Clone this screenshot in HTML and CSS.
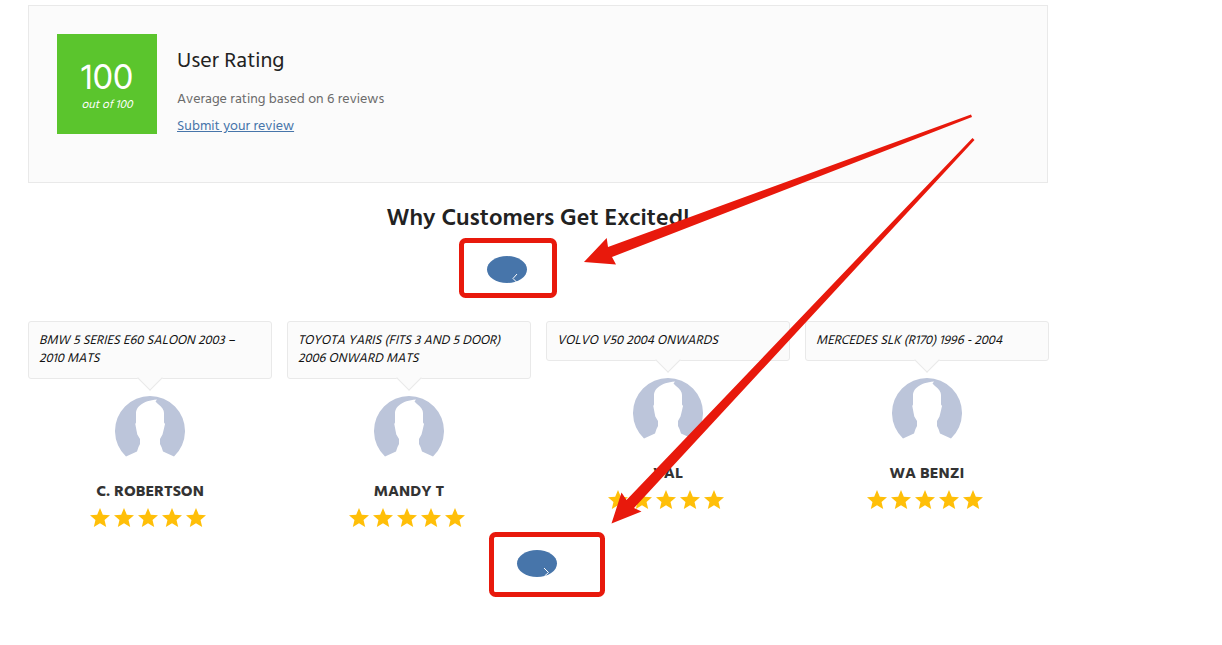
FILE: index.html
```
<!DOCTYPE html>
<html lang="en">

<head>
  <meta charset="UTF-8">
  <meta name="viewport" content="width=device-width, initial-scale=1.0">
  <title>User Rating</title>
  <link rel="stylesheet" href="styles.css">
</head>

<body>
  <!-- Shared shapes -->
  <svg class="sprite" aria-hidden="true">
    <symbol id="avatar" viewBox="0 0 70 70">
      <path d="M11 60.500A35 35 0 1 1 59 60.500L48 55.500L46.500 51L45 48V43L47.500 38.500L48.500 34.500L50 28L49 26.500V17C49 14 47 11 43 8L40.500 5.500L42 3.500C35 4 29 6 25.500 9C22 12 21 14 21 18V26.500L20.300 28L21.500 34.500L22.300 38.500L25 43V48L23.500 51L22 55.500Z"/>
    </symbol>
    <symbol id="star" viewBox="0 0 24 24">
      <path d="M12 17.270L18.180 21l-1.640-7.030L22 9.240l-7.190-.61L12 2 9.190 8.630 2 9.240l5.460 4.730L5.820 21z"/>
    </symbol>
  </svg>

  <main class="page">
    <section class="rating">
      <div class="score">
        <span class="score-value">100</span>
        <span class="score-total">out of 100</span>
      </div>
      <div class="rating-info">
        <h3>User Rating</h3>
        <p>Average rating based on 6 reviews</p>
        <a href="#review">Submit your review</a>
      </div>
    </section>

    <section class="testimonials">
      <h2>Why Customers Get Excited!</h2>

      <button type="button" class="nav prev" aria-label="Previous">
        <svg width="6" height="10" viewBox="0 0 6 10"><path d="M5 1L1 5.500l4 4"/></svg>
      </button>

      <div class="cards">
        <article class="card">
          <p class="bubble">BMW 5 SERIES E60 SALOON 2003 – 2010 MATS</p>
          <svg class="avatar"><use href="#avatar"/></svg>
          <h4>C. ROBERTSON</h4>
          <div class="stars" role="img" aria-label="5 stars">
            <svg><use href="#star"/></svg>
            <svg><use href="#star"/></svg>
            <svg><use href="#star"/></svg>
            <svg><use href="#star"/></svg>
            <svg><use href="#star"/></svg>
          </div>
        </article>

        <article class="card">
          <p class="bubble">TOYOTA YARIS (FITS 3 AND 5 DOOR) 2006 ONWARD MATS</p>
          <svg class="avatar"><use href="#avatar"/></svg>
          <h4>MANDY T</h4>
          <div class="stars" role="img" aria-label="5 stars">
            <svg><use href="#star"/></svg>
            <svg><use href="#star"/></svg>
            <svg><use href="#star"/></svg>
            <svg><use href="#star"/></svg>
            <svg><use href="#star"/></svg>
          </div>
        </article>

        <article class="card">
          <p class="bubble">VOLVO V50 2004 ONWARDS</p>
          <svg class="avatar"><use href="#avatar"/></svg>
          <h4>VAL</h4>
          <div class="stars" role="img" aria-label="5 stars">
            <svg><use href="#star"/></svg>
            <svg><use href="#star"/></svg>
            <svg><use href="#star"/></svg>
            <svg><use href="#star"/></svg>
            <svg><use href="#star"/></svg>
          </div>
        </article>

        <article class="card">
          <p class="bubble">MERCEDES SLK (R170) 1996 - 2004</p>
          <svg class="avatar"><use href="#avatar"/></svg>
          <h4>WA BENZI</h4>
          <div class="stars" role="img" aria-label="5 stars">
            <svg><use href="#star"/></svg>
            <svg><use href="#star"/></svg>
            <svg><use href="#star"/></svg>
            <svg><use href="#star"/></svg>
            <svg><use href="#star"/></svg>
          </div>
        </article>
      </div>

      <button type="button" class="nav next" aria-label="Next">
        <svg width="6" height="10" viewBox="0 0 6 10"><path d="M1 1l4.500 4.500-4 3.500"/></svg>
      </button>
    </section>
  </main>

  <!-- Red markup drawn over the page -->
  <svg class="markup" width="1000" height="620" aria-hidden="true">
    <rect x="461.500" y="240.500" width="93" height="55" rx="4"/>
    <rect x="491.500" y="534.500" width="111" height="60" rx="4"/>
    <path d="M584 262L606.700 238 608 247 971 114.500 972 117 612 257 616 264.500Z"/>
    <path d="M611.500 523.500L621.500 492.500 626.500 500 972.500 138 974.500 140 634 508 641.500 511.500Z"/>
  </svg>
</body>

</html>
```
FILE: styles.css
```
* {
  box-sizing: border-box;
}

:root {
  --blue: #4775aa;
  --red: #e8190c;
  --panel: #fbfbfb;
  --line: #e9e9e9;
}

body {
  margin: 0;
  background: #fff;
  color: #222;
  font-family: Hind, "Noto Sans", sans-serif;
  font-size: 14px;
}

h2,
h3,
h4,
p {
  margin: 0;
}

.sprite {
  display: none;
}

.page {
  margin: 5px 174px 0 28px;
}

.rating {
  display: flex;
  gap: 20px;
  padding: 28px 28px 42px;
  background: var(--panel);
  border: 1px solid var(--line);
}

.score {
  display: flex;
  flex-direction: column;
  align-items: center;
  width: 100px;
  height: 100px;
  padding-top: 29px;
  background: #5bc52d;
  color: #fff;
}

.score-value {
  font-size: 37px;
  line-height: 34px;
}

.score-total {
  font-size: 12px;
  font-style: italic;
  line-height: 16px;
}

.rating-info {
  color: #6b6b6b;
}

.rating-info h3 {
  margin: 14px 0 10px;
  color: #222;
  font-size: 22px;
  font-weight: 400;
  line-height: 28px;
}

.rating-info p,
.rating-info a {
  line-height: 27px;
}

.rating-info a {
  color: var(--blue);
}

.testimonials {
  display: flex;
  flex-direction: column;
  align-items: center;
}

.testimonials h2 {
  margin: 20px 0;
  font-size: 24px;
  font-weight: 600;
  line-height: 33px;
}

.nav {
  display: flex;
  align-items: flex-end;
  justify-content: flex-end;
  width: 40px;
  height: 27px;
  padding: 0 8px 0 0;
  border: 0;
  border-radius: 50%;
  background: var(--blue);
}

.nav svg {
  fill: none;
  stroke: #fff;
}

.prev {
  margin-right: 62px;
  padding-right: 9px;
}

.next {
  margin-right: 2px;
}

.cards {
  display: grid;
  grid-template-columns: repeat(4, 1fr);
  align-items: start;
  gap: 15px;
  width: calc(100% + 1px);
  margin: 38px -1px 20px 0;
}

.card {
  display: flex;
  flex-direction: column;
  align-items: center;
}

.bubble {
  position: relative;
  width: 100%;
  padding: 10px;
  border: 1px solid var(--line);
  border-radius: 3px;
  background: var(--panel);
  color: #111;
  font-size: 13px;
  font-style: italic;
  line-height: 18px;
}

.bubble::after {
  content: "";
  position: absolute;
  bottom: -9px;
  left: calc(50% - 9px);
  width: 17px;
  height: 17px;
  border: solid var(--line);
  border-width: 0 1px 1px 0;
  background: var(--panel);
  transform: rotate(45deg);
}

.avatar {
  width: 70px;
  height: 70px;
  margin-top: 17px;
  fill: #bcc5da;
}

.card h4 {
  margin: 14px 0 2px;
  color: #333;
  font-size: 16px;
  font-weight: 700;
  line-height: 24px;
}

.stars {
  display: flex;
  padding-right: 4px;
}

.stars svg {
  width: 24px;
  height: 24px;
  fill: #ffbf08;
}

.markup {
  position: absolute;
  top: 0;
  left: 0;
  fill: var(--red);
  pointer-events: none;
}

.markup rect {
  fill: none;
  stroke: var(--red);
  stroke-width: 5;
}
```
